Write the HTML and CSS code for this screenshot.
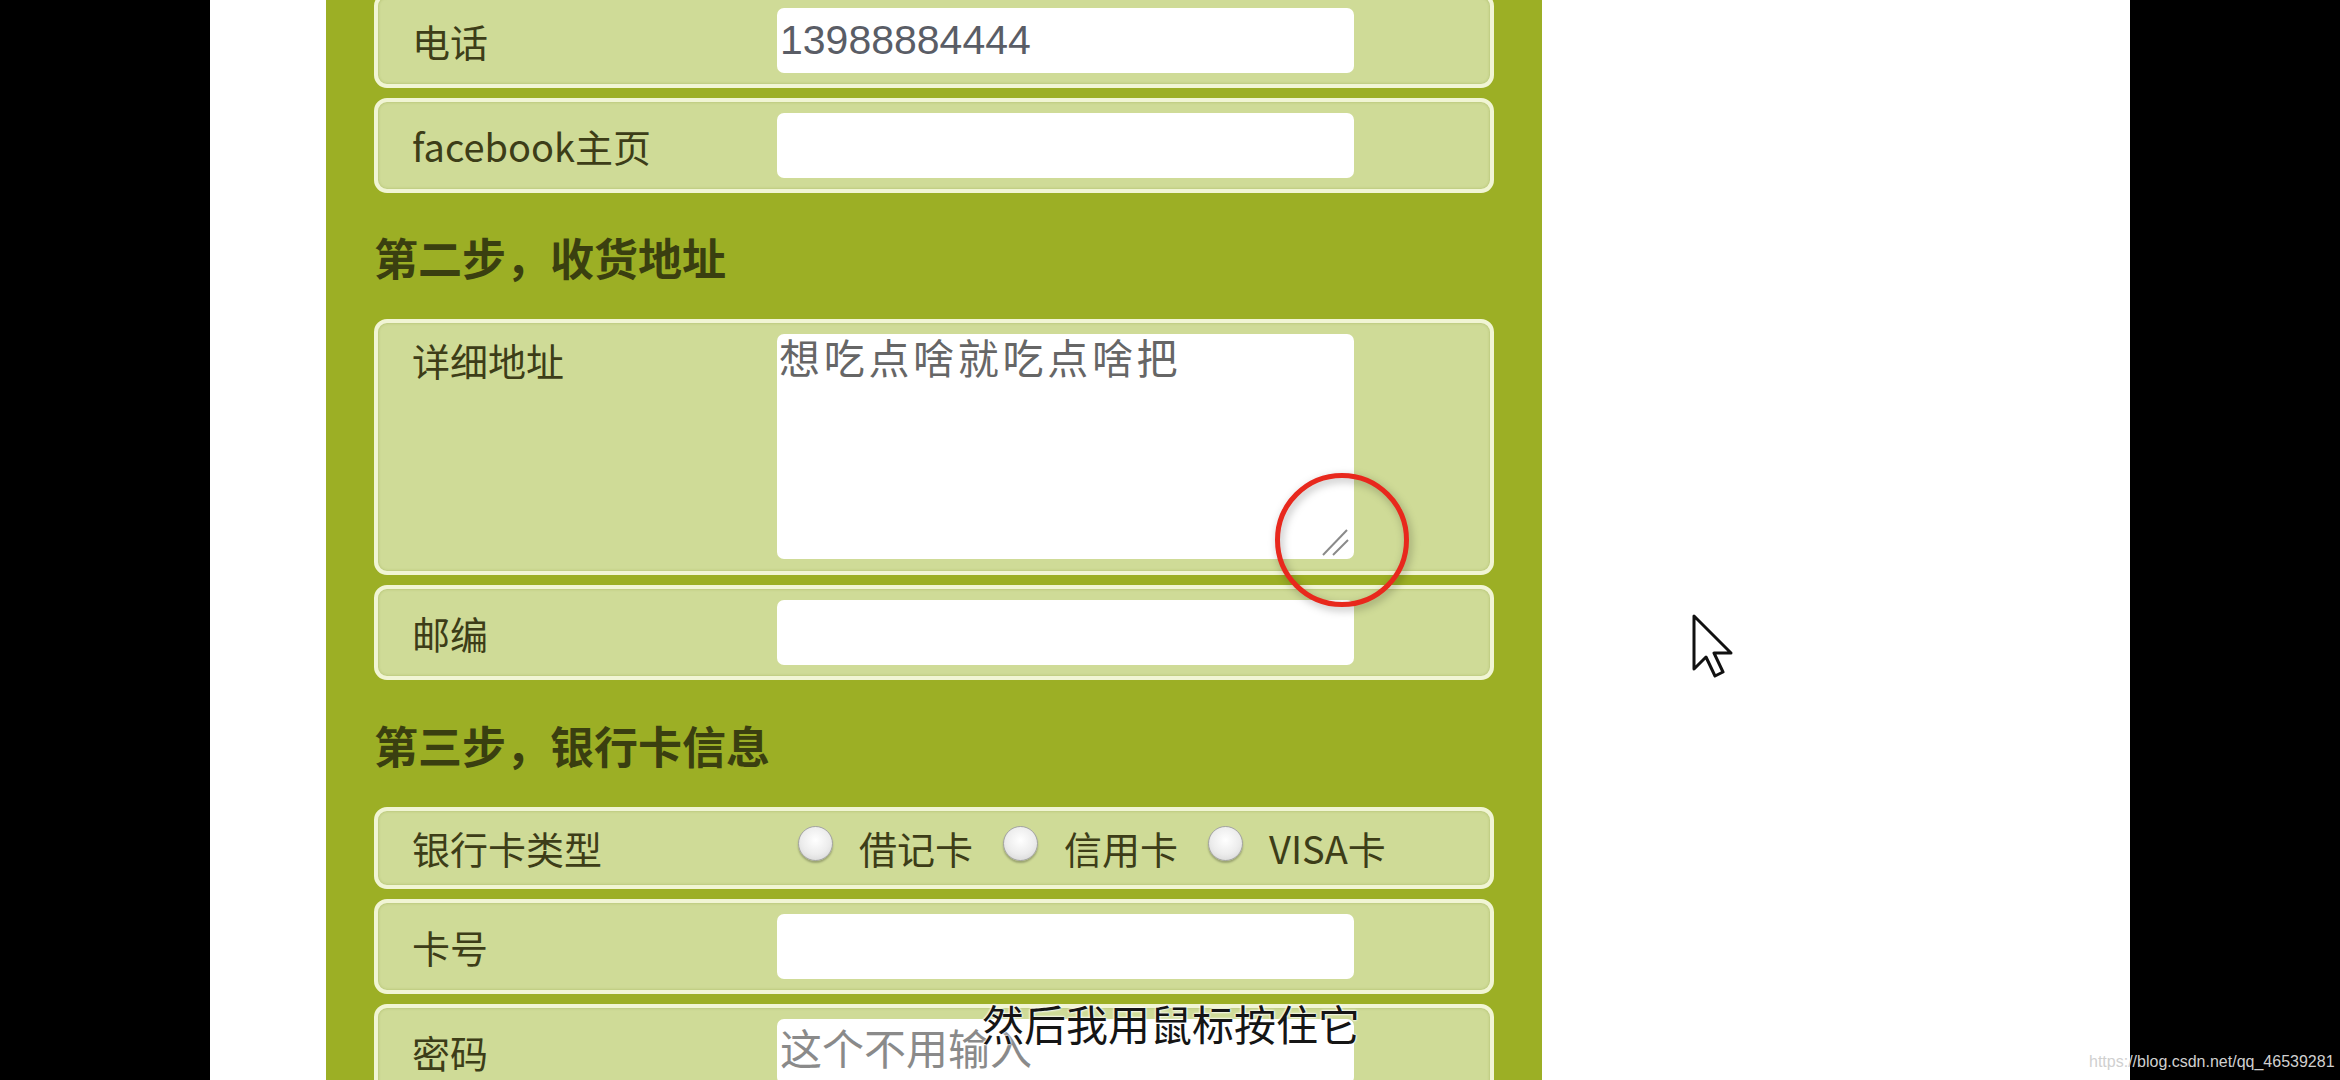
FILE: index.html
```html
<!DOCTYPE html>
<html lang="zh-CN">
<head>
<meta charset="utf-8">
<title>表单</title>
<link rel="stylesheet" href="styles.css">
</head>
<body>
<div class="screen">
  <div class="panel">
    <form class="form">
      <div class="row">
        <label class="label">电话</label>
        <input class="field field-value" type="text" value="13988884444">
      </div>
      <div class="row">
        <label class="label">facebook主页</label>
        <input class="field" type="text">
      </div>
      <h3 class="step">第二步，收货地址</h3>
      <div class="row row-top">
        <label class="label">详细地址</label>
        <div class="area-wrap">
          <textarea class="area">想吃点啥就吃点啥把</textarea>
          <svg class="grip" width="32" height="32" viewBox="0 0 32 32">
            <line x1="3" y1="29" x2="27" y2="4" />
            <line x1="13" y1="29" x2="28" y2="14" />
          </svg>
        </div>
      </div>
      <div class="row">
        <label class="label">邮编</label>
        <input class="field" type="text">
      </div>
      <h3 class="step step-2">第三步，银行卡信息</h3>
      <div class="row row-radio">
        <label class="label">银行卡类型</label>
        <div class="options">
          <label class="opt"><input class="radio" type="radio" name="card"><span>借记卡</span></label>
          <label class="opt"><input class="radio" type="radio" name="card"><span>信用卡</span></label>
          <label class="opt"><input class="radio" type="radio" name="card"><span>VISA卡</span></label>
        </div>
      </div>
      <div class="row">
        <label class="label">卡号</label>
        <input class="field" type="text">
      </div>
      <div class="row">
        <label class="label">密码</label>
        <input class="field" type="text" placeholder="这个不用输入">
      </div>
    </form>
  </div>
</div>

<div class="circle"></div>
<svg class="cursor" width="44" height="66" viewBox="0 0 44 66">
  <path d="M2 2 L2 55 L14 43 L23 62 L31 58 L22 39 L39 39 Z" />
</svg>
<div class="subtitle">然后我用鼠标按住它</div>
<div class="watermark">https://blog.csdn.net/qq_46539281</div>
</body>
</html>
```

FILE: styles.css
```css
html, body {
  margin: 0;
  padding: 0;
}

body {
  width: 2340px;
  height: 1080px;
  overflow: hidden;
  background: #000;
  position: relative;
  font-family: "Noto Sans CJK SC", "Noto Sans", sans-serif;
}

.screen {
  margin-left: 210px;
  width: 1920px;
  height: 1080px;
  background: #fff;
  overflow: hidden;
}

.panel {
  margin-left: 116px;
  width: 1120px;
  height: 1080px;
  padding: 0 48px;
  background: #9caf25;
  overflow: hidden;
}

.form {
  margin: -7px 0 0 0;
  display: flex;
  flex-direction: column;
}

.row {
  display: flex;
  align-items: center;
  border: 4px solid #f1f5d4;
  border-radius: 13px;
  background: #cfdb97;
  padding: 11px 0 11px 34px;
  margin-bottom: 10px;
  box-shadow: inset 0 0 3px rgba(110, 130, 20, 0.35);
}

.row-top {
  align-items: flex-start;
  padding-bottom: 12px;
}

.label {
  width: 365px;
  flex: none;
  font-size: 38px;
  line-height: 52px;
  color: #3d3d18;
}

.field {
  width: 577px;
  height: 65px;
  box-sizing: border-box;
  border: none;
  border-radius: 7px;
  background: #fff;
  padding: 0 0 0 3px;
  margin: 0;
  outline: none;
  font-family: "Liberation Sans", Arial, sans-serif;
  font-size: 41px;
  color: #5a5d66;
}

.field::placeholder {
  font-family: "Noto Sans CJK SC", sans-serif;
  font-size: 42px;
  color: #8a8a8a;
  opacity: 1;
}

.area-wrap {
  position: relative;
  width: 577px;
  height: 225px;
}

.area {
  display: block;
  width: 577px;
  height: 225px;
  box-sizing: border-box;
  border: none;
  border-radius: 7px;
  background: #fff;
  margin: 0;
  padding: 0 2px;
  resize: none;
  outline: none;
  font-family: "Noto Sans CJK SC", sans-serif;
  font-size: 41px;
  line-height: 44px;
  letter-spacing: 3.7px;
  color: #666;
}

.grip {
  position: absolute;
  right: 2px;
  bottom: 1px;
}

.grip line {
  stroke: #8a8a8a;
  stroke-width: 2;
}

.step {
  margin: 28px 0 36px 0;
  font-size: 44px;
  line-height: 52px;
  font-weight: bold;
  color: #3a3f10;
}

.step-2 {
  margin-top: 29px;
}

.options {
  display: flex;
  align-items: center;
  padding-left: 21px;
}

.opt {
  display: flex;
  align-items: center;
  margin-right: 30px;
  font-size: 38px;
  line-height: 52px;
  color: #3d3d18;
}

.radio {
  appearance: none;
  -webkit-appearance: none;
  width: 35px;
  height: 35px;
  margin: 0 26px 9px 0;
  border-radius: 50%;
  border: 1px solid #a3a3a3;
  background: radial-gradient(circle at 50% 40%, #ffffff 0%, #ececec 55%, #cfcfcf 100%);
  box-shadow: 0 2px 2px rgba(0, 0, 0, 0.25);
}

.circle {
  position: absolute;
  left: 1275px;
  top: 473px;
  width: 124px;
  height: 124px;
  border: 5px solid #e8281d;
  border-radius: 50%;
  filter: drop-shadow(2px 3px 4px rgba(0, 0, 0, 0.3));
}

.cursor {
  position: absolute;
  left: 1692px;
  top: 614px;
}

.cursor path {
  fill: #fff;
  stroke: #111;
  stroke-width: 3;
  stroke-linejoin: round;
}

.subtitle {
  position: absolute;
  left: 982px;
  top: 1002px;
  font-family: "Noto Sans CJK SC", sans-serif;
  font-size: 42px;
  line-height: 1;
  color: #151515;
  white-space: nowrap;
  text-shadow: 0 0 2px #fff, 0 0 2px #fff, 0 0 3px #fff;
}

.watermark {
  position: absolute;
  left: 2089px;
  top: 1054px;
  font-family: "Liberation Sans", Arial, sans-serif;
  font-size: 16px;
  line-height: 1;
  color: #d0d0d0;
  white-space: nowrap;
}
```
